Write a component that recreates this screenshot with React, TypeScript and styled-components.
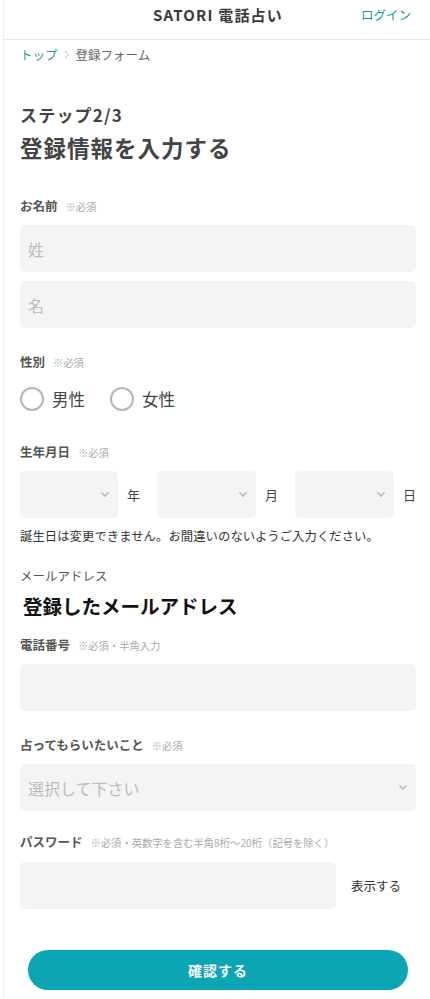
import React from "react";
import styled, { createGlobalStyle } from "styled-components";

const GlobalStyle = createGlobalStyle`
	html, body {
		margin: 0;
		padding: 0;
		background: #fff;
		overflow-x: hidden;
	}
	body {
		font-family: "Noto Sans CJK JP", "Noto Sans", sans-serif;
		color: #333;
	}
	* {
		box-sizing: border-box;
	}
`;

const Page = styled.div`
	width: 429px;
	margin-left: 3px;
	border-left: 1px solid #eee;
	min-height: 999px;
`;

const Header = styled.header`
	height: 40px;
	border-bottom: 1px solid #e6e6e6;
	display: grid;
	grid-template-columns: 1fr auto 1fr;
	align-items: center;
	padding: 0 16px;
`;

const Logo = styled.div`
	grid-column: 2;
	font-size: 15px;
	font-weight: 700;
	letter-spacing: 1.2px;
	color: #3a3a3a;
	line-height: 1;
	margin-top: -10px;
`;

const Login = styled.a`
	justify-self: end;
	margin-right: 5px;
	font-size: 12.5px;
	color: #1896a0;
	text-decoration: none;
	margin-top: -10px;
`;

const Crumbs = styled.nav`
	display: flex;
	align-items: center;
	gap: 6px;
	padding: 0 16px 2px;
	font-size: 12.5px;
	color: #666;
	height: 30px;
`;

const CrumbLink = styled.span`
	color: #2a9aa2;
`;

const Main = styled.main`
	padding: 4px 16px 0;
`;

const Step = styled.div`
	margin-top: 30px;
	font-size: 17px;
	font-weight: 700;
	color: #444;
	letter-spacing: 1.2px;
	line-height: 22px;
`;

const Title = styled.h1`
	margin: 6px 0 0;
	font-size: 22.5px;
	font-weight: 700;
	color: #444;
	letter-spacing: 1px;
	line-height: 30px;
`;

const Field = styled.section<{ $top: number }>`
	margin-top: ${(p) => p.$top}px;
	display: flex;
	flex-direction: column;
`;

const Label = styled.div`
	display: flex;
	align-items: baseline;
	gap: 8px;
	font-size: 12.5px;
	font-weight: 700;
	color: #555;
	line-height: 18px;
	margin-bottom: 9px;
`;

const Note = styled.span`
	font-size: 10.3px;
	font-weight: 400;
	color: #aaa;
`;

const Input = styled.input`
	display: block;
	width: 100%;
	height: 47px;
	border: none;
	border-radius: 5px;
	background: #f3f4f4;
	padding: 0 8px;
	font-family: inherit;
	font-size: 16px;
	color: #333;
	outline: none;
	&::placeholder {
		color: #bcbcbc;
	}
	& + & {
		margin-top: 9px;
	}
`;

const SelectBox = styled.div<{ $w?: number }>`
	position: relative;
	flex: none;
	height: 47px;
	width: ${(p) => (p.$w ? `${p.$w}px` : "100%")};
	border-radius: 5px;
	background: #f3f4f4;
	display: flex;
	align-items: center;
	padding: 0 8px;
	font-size: 16px;
	color: #bcbcbc;
`;

const Chevron = styled.svg`
	position: absolute;
	right: 8px;
	top: 50%;
	margin-top: -4px;
`;

const RadioRow = styled.div`
	display: flex;
	gap: 25px;
	margin-top: 6px;
`;

const Radio = styled.label`
	display: flex;
	align-items: center;
	gap: 8px;
	font-size: 16.5px;
	color: #444;
`;

const Circle = styled.span`
	width: 24px;
	height: 24px;
	border-radius: 50%;
	border: 2px solid #b5b5b5;
	background: #fff;
`;

const DateRow = styled.div`
	display: flex;
	align-items: center;
`;

const Unit = styled.span<{ $last?: boolean }>`
	flex: none;
	font-size: 13px;
	color: #444;
	padding: ${(p) => (p.$last ? "0 0 0 9px" : "0 17px 0 9px")};
`;

const Help = styled.p`
	margin: 9px 0 0;
	font-size: 12.3px;
	color: #333;
	line-height: 18px;
	letter-spacing: 0.1px;
`;

const MailLabel = styled.div`
	margin-top: 22px;
	font-size: 12.5px;
	color: #555;
	line-height: 18px;
`;

const MailValue = styled.div`
	margin-top: 9px;
	padding-left: 3px;
	font-size: 19.5px;
	font-weight: 700;
	color: #111;
	line-height: 24px;
`;

const PassRow = styled.div`
	display: flex;
	align-items: center;
	gap: 15px;
	margin-top: 1px;
`;

const PassInput = styled(Input)`
	width: 316px;
	flex: none;
`;

const Toggle = styled.span`
	font-size: 12.5px;
	color: #333;
`;

const Submit = styled.button`
	display: block;
	width: 380px;
	height: 40px;
	margin: 41px auto 0;
	border: none;
	border-radius: 20px;
	background: #0ca5b3;
	color: #fff;
	font-family: inherit;
	font-size: 14px;
	font-weight: 700;
	letter-spacing: 1px;
`;

const Down = () => (
	<Chevron width="10" height="7" viewBox="0 0 10 7">
		<path d="M1.5 1.5 L5 5 L8.5 1.5" fill="none" stroke="#bbb" strokeWidth="1.6" />
	</Chevron>
);

const App = () => {
	return (
		<>
			<GlobalStyle />
			<Page>
				<Header>
					<Logo>SATORI 電話占い</Logo>
					<Login>ログイン</Login>
				</Header>
				<Crumbs>
					<CrumbLink>トップ</CrumbLink>
					<svg width="6" height="9" viewBox="0 0 6 9">
						<path d="M1 1 L4.5 4.5 L1 8" fill="none" stroke="#bbb" strokeWidth="1" />
					</svg>
					<span>登録フォーム</span>
				</Crumbs>
				<Main>
					<Step>ステップ2/3</Step>
					<Title>登録情報を入力する</Title>

					<Field $top={35}>
						<Label>
							お名前<Note>※必須</Note>
						</Label>
						<Input placeholder="姓" />
						<Input placeholder="名" />
					</Field>

					<Field $top={25}>
						<Label>
							性別<Note>※必須</Note>
						</Label>
						<RadioRow>
							<Radio>
								<Circle />
								男性
							</Radio>
							<Radio>
								<Circle />
								女性
							</Radio>
						</RadioRow>
					</Field>

					<Field $top={32}>
						<Label>
							生年月日<Note>※必須</Note>
						</Label>
						<DateRow>
							<SelectBox $w={98}>
								<Down />
							</SelectBox>
							<Unit>年</Unit>
							<SelectBox $w={99}>
								<Down />
							</SelectBox>
							<Unit>月</Unit>
							<SelectBox $w={99}>
								<Down />
							</SelectBox>
							<Unit $last>日</Unit>
						</DateRow>
						<Help>誕生日は変更できません。お間違いのないようご入力ください。</Help>
					</Field>

					<MailLabel>メールアドレス</MailLabel>
					<MailValue>登録したメールアドレス</MailValue>

					<Field $top={18}>
						<Label>
							電話番号<Note>※必須・半角入力</Note>
						</Label>
						<Input />
					</Field>

					<Field $top={25}>
						<Label>
							占ってもらいたいこと<Note>※必須</Note>
						</Label>
						<SelectBox>
							選択して下さい
							<Down />
						</SelectBox>
					</Field>

					<Field $top={22}>
						<Label>
							パスワード<Note>※必須・英数字を含む半角8桁〜20桁（記号を除く）</Note>
						</Label>
						<PassRow>
							<PassInput type="password" />
							<Toggle>表示する</Toggle>
						</PassRow>
					</Field>

					<Submit>確認する</Submit>
				</Main>
			</Page>
		</>
	);
};

export default App;
